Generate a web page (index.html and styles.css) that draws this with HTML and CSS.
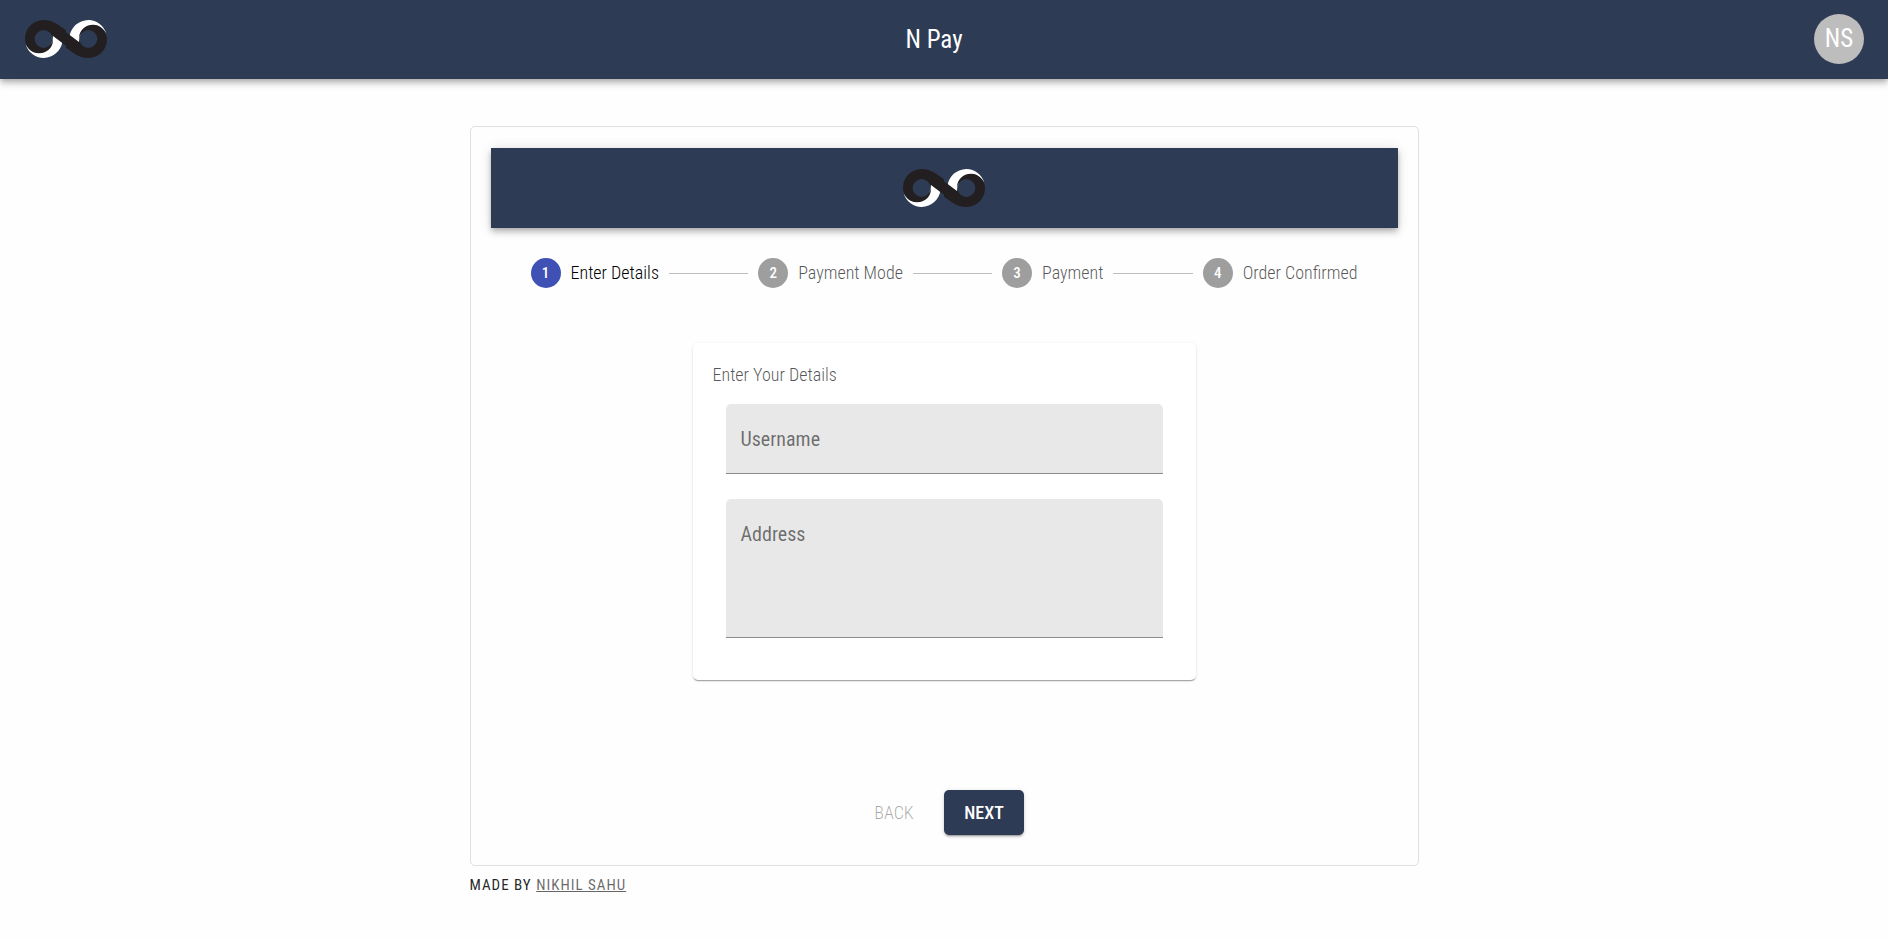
FILE: index.html
```html
<!DOCTYPE html>
<html lang="en">
<head>
<meta charset="utf-8">
<meta name="viewport" content="width=device-width, initial-scale=1">
<title>N Pay</title>
<link rel="stylesheet" href="styles.css">
</head>
<body>
<svg class="defs" aria-hidden="true">
  <symbol id="logo" viewBox="0 0 246 114">
    <g id="half">
      <path fill="#fff" d="M2 72 A56 56 0 0 0 56 114 C86 113 108 92 112 66 L83 44 C85 76 66 98 42 99 C24 99 10 88 2 72Z"/>
      <path fill="#231f20" d="M123 31 L97 13 C83 4 72 0 56 0 C24 0 0 25 0 57 C0 81 20 100 42 100 C66 100 84 82 84 60 L84 48 L123 77Z M56 30 A27 27 0 1 1 56 84 A27 27 0 1 1 56 30Z" fill-rule="evenodd"/>
    </g>
    <use href="#half" transform="rotate(180 123 57)"/>
  </symbol>
</svg>
<header class="appbar">
  <a href="#" class="home" aria-label="Home"><svg class="logo"><use href="#logo"/></svg></a>
  <h1 class="title">N Pay</h1>
  <button class="avatar" type="button">NS</button>
</header>
<main class="page">
  <section class="panel">
    <div class="banner"><svg class="logo" role="img" aria-label="N Pay"><use href="#logo"/></svg></div>
    <ol class="stepper">
      <li class="step active"><span class="dot">1</span><span>Enter Details</span></li>
      <li class="line"></li>
      <li class="step"><span class="dot">2</span><span>Payment Mode</span></li>
      <li class="line"></li>
      <li class="step"><span class="dot">3</span><span>Payment</span></li>
      <li class="line"></li>
      <li class="step"><span class="dot">4</span><span>Order Confirmed</span></li>
    </ol>
    <form class="details">
      <h2 class="subtitle">Enter Your Details</h2>
      <div class="field">
        <label for="username">Username</label>
        <input id="username" type="text">
      </div>
      <div class="field">
        <label for="address">Address</label>
        <textarea id="address"></textarea>
      </div>
    </form>
    <div class="actions">
      <button class="btn" type="button" disabled>BACK</button>
      <button class="btn primary" type="button">NEXT</button>
    </div>
  </section>
  <footer class="credit">MADE BY <a href="#">NIKHIL SAHU</a></footer>
</main>
</body>
</html>
```
FILE: styles.css
```css
* { box-sizing: border-box; }
body {
  margin: 0;
  background: #fefefe;
  color: rgba(0, 0, 0, 0.87);
  font-family: "Roboto Condensed", "Liberation Sans Narrow", Roboto, sans-serif;
  font-size: 18px;
  font-weight: 300;
  line-height: 24px;
}
button, input, textarea { font: inherit; }
.defs { position: absolute; width: 0; height: 0; }
.appbar {
  display: grid;
  grid-template-columns: 1fr auto 1fr;
  align-items: center;
  padding: 14px 24px 15px;
  background: #2e3b55;
  color: #fff;
  box-shadow: 0 2px 5px -1px rgba(0, 0, 0, 0.2), 0 5px 6px rgba(0, 0, 0, 0.14), 0 1px 12px rgba(0, 0, 0, 0.12);
}
.home { display: flex; }
.logo { display: block; width: 84px; height: 38px; }
.title { margin: 0; padding: 2px 20px 0 0; font-size: 25px; font-weight: 400; line-height: 40px; }
.avatar {
  justify-self: end;
  width: 50px;
  height: 50px;
  padding: 0;
  border: 0;
  border-radius: 50%;
  background: #bdbdbd;
  color: #fff;
  font-size: 25px;
  font-weight: 400;
}
.page { width: 100%; max-width: 949px; margin: 47px auto 0; }
.panel {
  padding: 21px 20px 30px;
  border: 1px solid #e0e0e0;
  border-radius: 5px;
}
.banner {
  display: flex;
  align-items: center;
  justify-content: center;
  height: 80px;
  background: #2e3b55;
  box-shadow: 0 2px 5px -1px rgba(0, 0, 0, 0.2), 0 5px 6px rgba(0, 0, 0, 0.14), 0 1px 12px rgba(0, 0, 0, 0.12);
}
.stepper {
  display: flex;
  align-items: center;
  gap: 10px;
  margin: 30px 40px 55px;
  padding: 0;
  list-style: none;
}
.step { display: flex; align-items: center; gap: 10px; color: rgba(0, 0, 0, 0.68); white-space: nowrap; }
.step.active { color: #000; }
.dot {
  width: 30px;
  height: 30px;
  border-radius: 50%;
  background: #9e9e9e;
  color: #fff;
  font-size: 15px;
  font-weight: 500;
  line-height: 30px;
  text-align: center;
}
.active .dot { background: #3f51b5; }
.line { flex: 1; height: 1px; background: #bdbdbd; }
.details {
  max-width: 503px;
  margin: 0 auto 110px;
  padding: 20px 20px 42px;
  border-radius: 5px;
  background: #fff;
  box-shadow: 0 2px 1px -1px rgba(0, 0, 0, 0.2), 0 1px 1px rgba(0, 0, 0, 0.14), 0 1px 3px rgba(0, 0, 0, 0.12);
}
.subtitle { margin: 0 0 17px; color: rgba(0, 0, 0, 0.68); font-size: 18px; font-weight: 300; line-height: 24px; }
.field { position: relative; margin: 0 13px; }
.field + .field { margin-top: 25px; }
.field label { position: absolute; top: 23px; left: 15px; color: rgba(0, 0, 0, 0.54); font-size: 20px; font-weight: 400; }
.field input, .field textarea {
  display: block;
  width: 100%;
  height: 70px;
  padding: 30px 15px 10px;
  border: 0;
  border-bottom: 1px solid #8b8b8b;
  border-radius: 5px 5px 0 0;
  outline: 0;
  background: #e8e8e8;
  resize: none;
}
.field textarea { height: 139px; }
.actions { display: flex; justify-content: center; gap: 10px; padding-right: 10px; }
.btn {
  min-width: 80px;
  height: 45px;
  padding: 0 20px;
  border: 0;
  border-radius: 5px;
  background: transparent;
  color: rgba(0, 0, 0, 0.34);
}
.btn.primary {
  background: #2e3b55;
  color: #fff;
  font-weight: 500;
  box-shadow: 0 3px 1px -2px rgba(0, 0, 0, 0.2), 0 2px 2px rgba(0, 0, 0, 0.14), 0 1px 5px rgba(0, 0, 0, 0.12);
}
.credit { padding: 7px 0; font-size: 15px; font-weight: 400; letter-spacing: 1px; }
.credit a { color: rgba(0, 0, 0, 0.6); }
```
